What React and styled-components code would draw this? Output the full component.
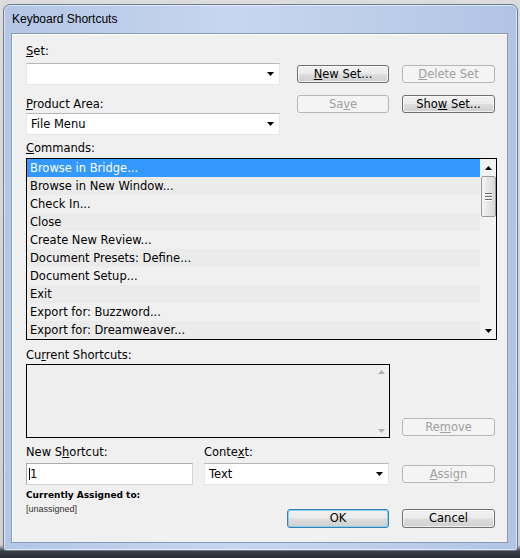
import React from "react";
import styled, { createGlobalStyle } from "styled-components";

const GlobalStyle = createGlobalStyle`
  html, body {
    margin: 0;
    padding: 0;
  }
  body {
    width: 520px;
    height: 558px;
    overflow: hidden;
    background: #d4d4d4;
    font-family: "DejaVu Sans", "Liberation Sans", sans-serif;
  }
`

const Desktop = styled.div`
  width: 520px;
  height: 558px;
  box-sizing: border-box;
  padding: 4px 0 0 3px;
  background: linear-gradient(#dcdcdc 0, #d0d0d0 545px, #3a3e46 551px, #2a2e35 100%);
`

const Window = styled.div`
  width: 515px;
  height: 547px;
  box-sizing: border-box;
  border: 1px solid #6d7a8e;
  border-radius: 7px 7px 3px 3px;
  background: linear-gradient(to right, #b3c6e6 0%, #c7d6f0 45%, #bccdea 75%, #b1c4e4 100%);
  box-shadow: inset 0 0 0 1px rgba(255, 255, 255, 0.55);
  padding: 0 9px 7px 7px;
  display: flex;
  flex-direction: column;
`

const TitleBar = styled.div`
  height: 28px;
  display: flex;
  align-items: center;
  padding-left: 1px;
  font-family: "Liberation Sans", sans-serif;
  font-size: 12px;
  color: #000;
`

const Client = styled.div`
  flex: 1;
  background: #f0f0f0;
  border: 1px solid #8a9ab2;
  box-shadow: inset 1px 1px 0 #ffffff;
  padding: 10px 0 0 14px;
  display: flex;
  flex-direction: column;
  font-size: 11.5px;
  color: #000;
`

const Label = styled.div`
  height: 14px;
  line-height: 14px;
  white-space: nowrap;
  margin-top: ${p => p.$mt || 0}px;
  width: ${p => (p.$w ? `${p.$w}px` : "auto")};
  flex: none;
`

const Mn = styled.span`
  text-decoration: underline;
  text-underline-offset: 1px;
`

const Row = styled.div`
  display: flex;
  align-items: ${p => p.$align || "center"};
  margin-top: ${p => p.$mt || 0}px;
`

const ButtonPair = styled.div`
  display: grid;
  grid-template-columns: 92px 93px;
  column-gap: 13px;
  margin-left: 17px;
`

const Button = styled.div`
  box-sizing: border-box;
  height: ${p => p.$h || 18}px;
  line-height: ${p => (p.$h || 18) - 2}px;
  width: ${p => (p.$w ? `${p.$w}px` : "auto")};
  margin-left: ${p => p.$ml || 0}px;
  margin-top: ${p => p.$mt || 0}px;
  margin-bottom: ${p => p.$mb || 0}px;
  border: 1px solid ${p => (p.$disabled ? "#b5b8bb" : p.$default ? "#3c7fb1" : "#707070")};
  border-radius: 3px;
  background: ${p =>
    p.$disabled
      ? "#f4f4f4"
      : "linear-gradient(#f2f2f2 0%, #ebebeb 48%, #dddddd 52%, #cfcfcf 100%)"};
  box-shadow: ${p =>
    p.$default
      ? "inset 0 0 0 1px #7fd2f0"
      : p.$disabled
      ? "none"
      : "inset 0 0 0 1px rgba(255,255,255,0.7)"};
  color: ${p => (p.$disabled ? "#a0a0a0" : "#000")};
  text-align: center;
  white-space: nowrap;
  flex: none;
`

const Combo = styled.div`
  box-sizing: border-box;
  width: ${p => p.$w}px;
  height: 22px;
  margin-left: ${p => p.$ml || 0}px;
  background: #ffffff;
  border: 1px solid #e3e6ea;
  border-top-color: #b4b8bd;
  display: flex;
  align-items: center;
  justify-content: space-between;
  padding: 0 3px 0 4px;
  flex: none;
`

const Arrow = ({ up, color = "#000" }) => (
  <svg width="7" height="4" viewBox="0 0 7 4">
    <path d={up ? "M0 4 L7 4 L3.5 0 Z" : "M0 0 L7 0 L3.5 4 Z"} fill={color} />
  </svg>
)

const ComboArrow = styled.span`
  display: flex;
  width: 11px;
  justify-content: center;
`

const ListBox = styled.div`
  box-sizing: border-box;
  width: 471px;
  height: 182px;
  margin-top: 3px;
  border: 1px solid #000;
  background: #efefef;
  display: flex;
`

const Items = styled.div`
  flex: 1;
  display: flex;
  flex-direction: column;
`

const Item = styled.div`
  height: 18px;
  line-height: 18px;
  padding-left: 3px;
  white-space: nowrap;
  background: ${p => (p.$selected ? "#3399ff" : p.$odd ? "#ebebeb" : "#f0f0f0")};
  color: ${p => (p.$selected ? "#fff" : "#000")};
`

const ScrollBar = styled.div`
  width: 16px;
  background: #f2f2f2;
  display: flex;
  flex-direction: column;
  align-items: center;
`

const ScrollArrow = styled.div`
  height: 17px;
  width: 16px;
  display: flex;
  align-items: center;
  justify-content: center;
`

const Track = styled.div`
  flex: 1;
  width: 16px;
  display: flex;
  flex-direction: column;
  align-items: center;
`

const Thumb = styled.div`
  box-sizing: border-box;
  width: 15px;
  height: 41px;
  border: 1px solid #9a9a9a;
  border-radius: 2px;
  background: linear-gradient(to right, #f6f6f6, #e4e4e4 50%, #d6d6d6);
  display: flex;
  flex-direction: column;
  align-items: center;
  justify-content: center;
  gap: 2px;
`

const Grip = styled.div`
  width: 7px;
  height: 1px;
  background: #6a6a6a;
  box-shadow: 0 1px 0 #ffffff;
`

const ShortcutBox = styled.div`
  box-sizing: border-box;
  width: 364px;
  height: 74px;
  border: 1px solid #000;
  background: #efefef;
  display: flex;
  justify-content: flex-end;
  flex: none;
`

const SmallBar = styled.div`
  width: 15px;
  display: flex;
  flex-direction: column;
  justify-content: space-between;
  align-items: center;
  padding: 5px 0 4px;
`

const TextInput = styled.div`
  box-sizing: border-box;
  width: 167px;
  height: 22px;
  background: #fff;
  border: 1px solid #a9acb1;
  border-right-color: #d4d6da;
  border-bottom-color: #d4d6da;
  display: flex;
  align-items: center;
  padding-left: 2px;
  flex: none;
`

const Caret = styled.span`
  width: 1px;
  height: 12px;
  background: #000;
`

const Footer = styled.div`
  display: flex;
  align-items: flex-start;
  margin-top: 4px;
`

const Assigned = styled.div`
  width: 261px;
  display: flex;
  flex-direction: column;
`

const AssignedTitle = styled.div`
  font-size: 9px;
  font-weight: bold;
  line-height: 12px;
`

const AssignedValue = styled.div`
  font-family: "Liberation Sans", sans-serif;
  font-size: 9px;
  line-height: 12px;
  margin-top: 2px;
  color: #333;
`

const commands = [
  "Browse in Bridge...",
  "Browse in New Window...",
  "Check In...",
  "Close",
  "Create New Review...",
  "Document Presets: Define...",
  "Document Setup...",
  "Exit",
  "Export for: Buzzword...",
  "Export for: Dreamweaver...",
]

export default function App() {
  return (
    <>
      <GlobalStyle />
      <Desktop>
        <Window>
          <TitleBar>Keyboard Shortcuts</TitleBar>
          <Client>
            <Label><Mn>S</Mn>et:</Label>
            <Row $mt={5}>
              <Combo $w={254}>
                <span />
                <ComboArrow><Arrow /></ComboArrow>
              </Combo>
              <ButtonPair>
                <Button><Mn>N</Mn>ew Set...</Button>
                <Button $disabled><Mn>D</Mn>elete Set</Button>
              </ButtonPair>
            </Row>

            <Row $mt={10} $align="flex-start">
              <Label $w={254} $mt={2}><Mn>P</Mn>roduct Area:</Label>
              <ButtonPair>
                <Button $disabled>Sa<Mn>v</Mn>e</Button>
                <Button>Sho<Mn>w</Mn> Set...</Button>
              </ButtonPair>
            </Row>
            <Row>
              <Combo $w={254}>
                <span>File Menu</span>
                <ComboArrow><Arrow /></ComboArrow>
              </Combo>
            </Row>

            <Label $mt={6}><Mn>C</Mn>ommands:</Label>
            <ListBox>
              <Items>
                {commands.map((c, i) => (
                  <Item key={c} $selected={i === 0} $odd={i % 2 === 1}>{c}</Item>
                ))}
              </Items>
              <ScrollBar>
                <ScrollArrow><Arrow up /></ScrollArrow>
                <Track>
                  <Thumb>
                    <Grip />
                    <Grip />
                    <Grip />
                  </Thumb>
                </Track>
                <ScrollArrow><Arrow /></ScrollArrow>
              </ScrollBar>
            </ListBox>

            <Label $mt={8}>Cu<Mn>r</Mn>rent Shortcuts:</Label>
            <Row $mt={2} $align="flex-end">
              <ShortcutBox>
                <SmallBar>
                  <Arrow up color="#b0b0b0" />
                  <Arrow color="#b0b0b0" />
                </SmallBar>
              </ShortcutBox>
              <Button $disabled $w={93} $ml={12} $mb={2}>Re<Mn>m</Mn>ove</Button>
            </Row>

            <Row $mt={7}>
              <Label $w={178}>New S<Mn>h</Mn>ortcut:</Label>
              <Label>Conte<Mn>x</Mn>t:</Label>
            </Row>
            <Row $mt={4}>
              <TextInput>
                <Caret />
                <span>1</span>
              </TextInput>
              <Combo $w={185} $ml={11}>
                <span>Text</span>
                <ComboArrow><Arrow /></ComboArrow>
              </Combo>
              <Button $disabled $w={93} $ml={13}><Mn>A</Mn>ssign</Button>
            </Row>

            <Footer>
              <Assigned>
                <AssignedTitle>Currently Assigned to:</AssignedTitle>
                <AssignedValue>[unassigned]</AssignedValue>
              </Assigned>
              <Button $default $w={102} $h={19} $mt={20}>OK</Button>
              <Button $w={93} $h={19} $mt={20} $ml={13}>Cancel</Button>
            </Footer>
          </Client>
        </Window>
      </Desktop>
    </>
  )
}
